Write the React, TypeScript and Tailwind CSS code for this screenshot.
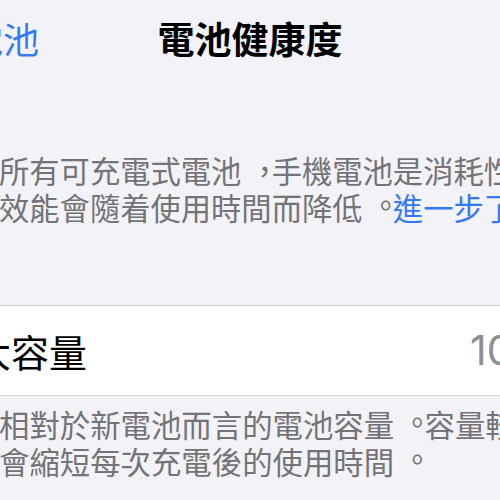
import React from "react";

function P({ c }: { c: string }) {
  if (c === "。")
    return <span className="inline-block translate-x-[8px] -translate-y-[3px]">。</span>;
  return <span className="inline-block translate-x-[8px]">{c}</span>;
}

export default function App() {
  return (
    <div
      lang="zh-Hant"
      className="w-[500px] h-[500px] overflow-hidden bg-[#f2f2f7] font-['Noto_Sans_CJK_TC','Noto_Sans_CJK_SC',sans-serif]"
    >
      {/* Nav bar */}
      <div className="grid grid-cols-[1fr_auto_1fr] items-center h-[76px]">
        <div className="-ml-[33px] text-[36px] leading-none text-[#3478f6] whitespace-nowrap">電池</div>
        <div className="text-[37px] leading-none font-bold text-black whitespace-nowrap">電池健康度</div>
        <div />
      </div>

      {/* Description */}
      <div className="mt-[76px] -ml-[1px] text-[30.3px] leading-[37px] text-[#737378] whitespace-nowrap">
        <div>
          所有可充電式電池<P c="，" />手機電池是消耗性組件，
        </div>
        <div>
          效能會隨着使用時間而降低<P c="。" />
          <span className="text-[#3478f6]">進一步了解…</span>
        </div>
      </div>

      {/* Cell */}
      <div className="mt-[79px] h-[91px] bg-white border-y border-[#d1d1d6] grid grid-cols-[1fr_30px] items-center whitespace-nowrap">
        <div className="-ml-[65px] text-[38px] leading-none text-black">最大容量</div>
        <div className="text-[41px] leading-none text-[#8e8e93] font-['Inter',sans-serif]">100%</div>
      </div>

      {/* Footer */}
      <div className="mt-[10px] -ml-[1px] text-[30.4px] leading-[36.5px] text-[#737378] whitespace-nowrap">
        <div>
          相對於新電池而言的電池容量<P c="。" />容量較低可能
        </div>
        <div>
          會縮短每次充電後的使用時間<P c="。" />
        </div>
      </div>
    </div>
  );
}
